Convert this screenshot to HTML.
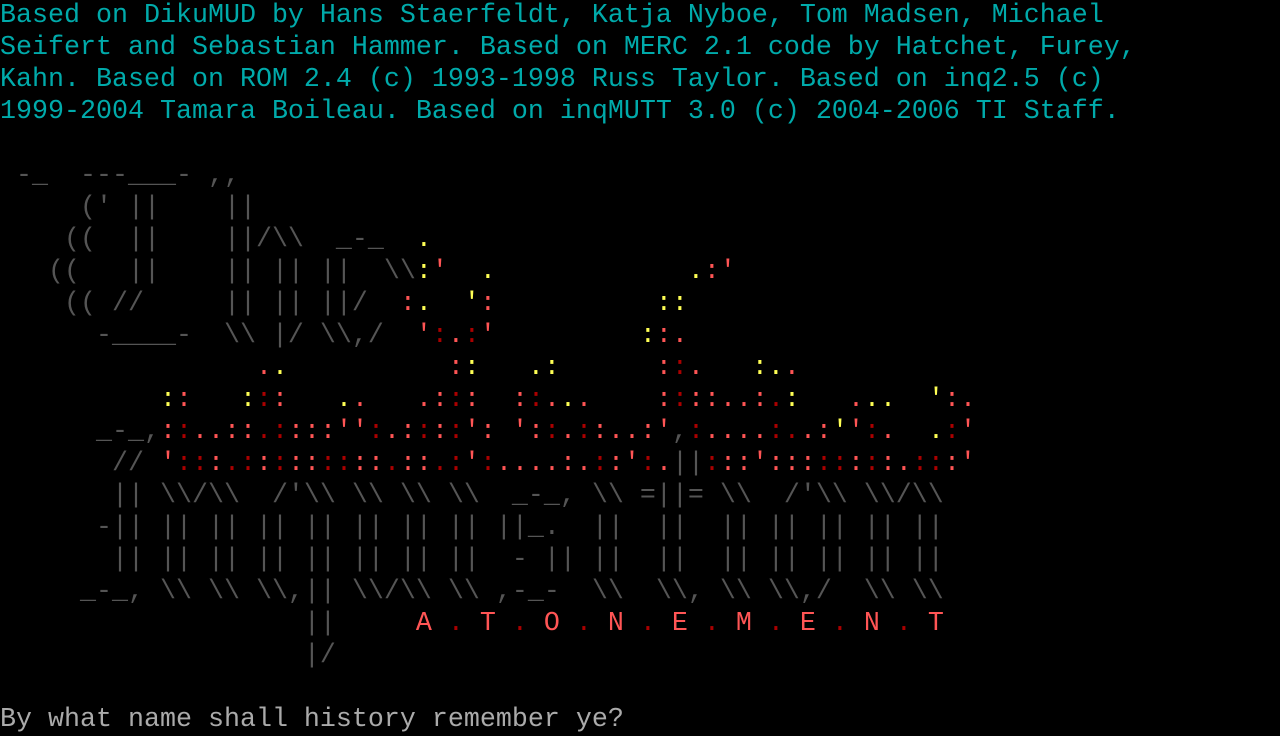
<!DOCTYPE html>
<html><head><meta charset="utf-8"><style>
html,body{margin:0;padding:0;background:#000;width:1280px;height:736px;overflow:hidden}
pre{margin:0;font-family:"Liberation Mono",monospace;font-size:26.667px;line-height:32px;color:#555;white-space:pre}
.c{color:#00aaaa}.r{color:#ff5555}.d{color:#aa0000}.y{color:#ffff55}.w{color:#aaaaaa}
</style></head><body><pre><span class="c">Based on DikuMUD by Hans Staerfeldt, Katja Nyboe, Tom Madsen, Michael
Seifert and Sebastian Hammer. Based on MERC 2.1 code by Hatchet, Furey,
Kahn. Based on ROM 2.4 (c) 1993-1998 Russ Taylor. Based on inq2.5 (c)
1999-2004 Tamara Boileau. Based on inqMUTT 3.0 (c) 2004-2006 TI Staff.</span>

 -_  ---___- ,,
     (' ||    ||
    ((  ||    ||/\\  _-_  <span class="y">.</span>
   ((   ||    || || ||  \\<span class="y">:</span><span class="r">'</span>  <span class="y">.</span>            <span class="y">.</span><span class="r">:'</span>
    (( //     || || ||/  <span class="r">:</span><span class="y">.</span>  <span class="y">'</span><span class="r">:</span>          <span class="y">::</span>
      -____-  \\ |/ \\,/  <span class="r">'</span><span class="d">:</span><span class="r">.</span><span class="d">:</span><span class="r">'</span>         <span class="y">:</span><span class="r">:.</span>
                <span class="r">.</span><span class="y">.</span>          <span class="r">:</span><span class="y">:</span>   <span class="y">.:</span>      <span class="r">:</span><span class="d">:</span><span class="r">.</span>   <span class="y">:.</span><span class="r">.</span>
          <span class="y">:</span><span class="r">:</span>   <span class="y">:</span><span class="d">:</span><span class="r">:</span>   <span class="y">.</span><span class="r">.</span>   <span class="r">.:</span><span class="d">:</span><span class="r">:</span>  <span class="r">:</span><span class="d">:</span><span class="r">.</span><span class="y">.</span><span class="r">.</span>    <span class="r">:</span><span class="d">:</span><span class="r">::..:</span><span class="d">.</span><span class="y">:</span>   <span class="r">.</span><span class="y">..</span>  <span class="y">'</span><span class="r">:.</span>
      _-_,<span class="r">:</span><span class="d">:</span><span class="r">..::</span><span class="d">.:</span><span class="r">:::''</span><span class="d">:</span><span class="r">.:</span><span class="d">:</span><span class="r">:</span><span class="d">:</span><span class="r">':</span> <span class="r">':</span><span class="d">:</span><span class="r">.</span><span class="d">:</span><span class="r">:..:'</span>,<span class="d">:</span><span class="r">....</span><span class="d">:.</span><span class="r">.:</span><span class="y">'</span><span class="r">'</span><span class="d">:</span><span class="r">.</span>  <span class="y">.</span><span class="d">:</span><span class="r">'</span>
       // <span class="r">'</span><span class="d">::</span><span class="r">:</span><span class="d">.:</span><span class="r">:</span><span class="d">:</span><span class="r">::</span><span class="d">::</span><span class="r">::</span><span class="d">.</span><span class="r">::</span><span class="d">.:</span><span class="r">'</span><span class="d">:</span><span class="r">....:.</span><span class="d">:</span><span class="r">:'</span><span class="d">:</span><span class="r">.</span>||<span class="d">:</span><span class="r">::':::</span><span class="d">::</span><span class="r">:</span><span class="d">:</span><span class="r">:.</span><span class="d">::</span><span class="r">:'</span>
       || \\/\\  /'\\ \\ \\ \\  _-_, \\ =||= \\  /'\\ \\/\\
      -|| || || || || || || || ||_.  ||  ||  || || || || ||
       || || || || || || || ||  - || ||  ||  || || || || ||
     _-_, \\ \\ \\,|| \\/\\ \\ ,-_-  \\  \\, \\ \\,/  \\ \\
                   ||     <span class="r">A</span> <span class="d">.</span> <span class="r">T</span> <span class="d">.</span> <span class="r">O</span> <span class="d">.</span> <span class="r">N</span> <span class="d">.</span> <span class="r">E</span> <span class="d">.</span> <span class="r">M</span> <span class="d">.</span> <span class="r">E</span> <span class="d">.</span> <span class="r">N</span> <span class="d">.</span> <span class="r">T</span>
                   |/

<span class="w">By what name shall history remember ye?</span></pre></body></html>
